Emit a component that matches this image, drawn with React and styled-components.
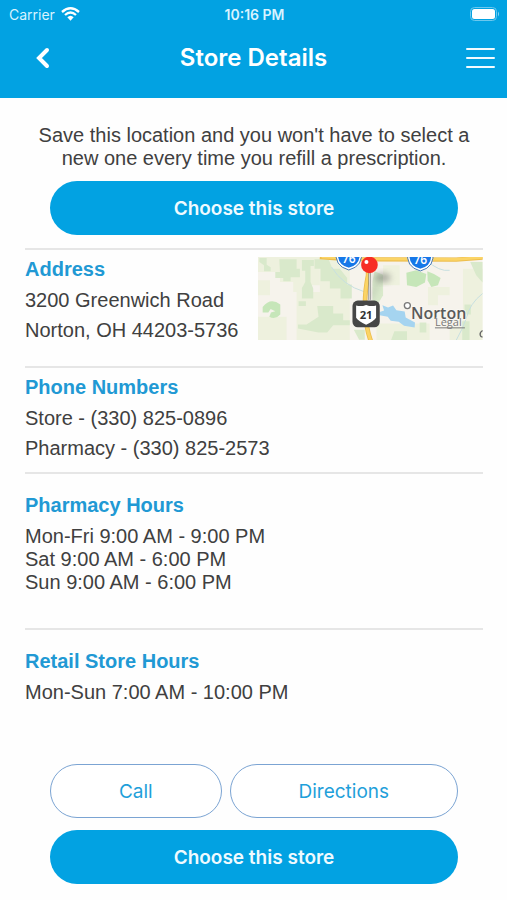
import React from "react";
import styled, { createGlobalStyle } from "styled-components";

const GlobalStyle = createGlobalStyle`
  *, *::before, *::after { box-sizing: border-box; }
  body {
    margin: 0;
    background: #fefefe;
    color: #404040;
    font-family: "Liberation Sans", Arial, sans-serif;
    font-size: 20px;
  }
  p, h1, h2, ul { margin: 0; padding: 0; }
  button { font: inherit; cursor: pointer; }
`;

const Header = styled.header`
  background: #02a2e2;
  color: #ffffff;
  font-family: Inter, sans-serif;
`;

const StatusBar = styled.div`
  display: grid;
  grid-template-columns: 1fr auto 1fr;
  align-items: center;
  height: 28px;
  padding: 0 7px 0 9px;
  color: #d8f3ff;
  font-size: 14px;
`;

const Carrier = styled.span`
  display: flex;
  align-items: center;
  gap: 6px;
`;

const Clock = styled.span`
  font-weight: 600;
`;

const Battery = styled.svg`
  justify-self: end;
`;

const NavBar = styled.div`
  display: grid;
  grid-template-columns: 60px 1fr 60px;
  align-items: center;
  height: 70px;
  padding: 0 12px 10px;
`;

const Title = styled.h1`
  font-size: 24px;
  font-weight: 600;
  line-height: 30px;
  text-align: center;
`;

const IconButton = styled.button`
  display: flex;
  justify-content: ${(p) => (p.$end ? "flex-end" : "center")};
  align-items: center;
  height: 44px;
  padding: 0;
  border: 0;
  background: none;
  color: inherit;
`;

const Main = styled.main`
  padding: 26px 24px 16px 25px;
`;

const Intro = styled.p`
  max-width: 440px;
  margin: 0 auto 11px;
  line-height: 23px;
  text-align: center;
`;

const Actions = styled.div`
  display: flex;
  flex-wrap: wrap;
  gap: 12px 8px;
  padding: 0 25px;
`;

const Button = styled.button`
  flex: 1 1 ${(p) => (p.$primary ? "100%" : "auto")};
  height: 54px;
  padding: 0 24px;
  border: ${(p) => (p.$primary ? "0" : "1px solid #7ba4d3")};
  border-radius: 27px;
  background: ${(p) => (p.$primary ? "#02a2e2" : "#ffffff")};
  color: ${(p) => (p.$primary ? "#effaff" : "#1fa0da")};
  font-family: Inter, sans-serif;
  font-size: 19px;
  font-weight: ${(p) => (p.$primary ? 600 : 400)};
`;

const Details = styled.div`
  margin-top: 13px;
`;

const Section = styled.section`
  display: flex;
  justify-content: space-between;
  gap: 20px;
  padding: ${(p) => (p.$roomy ? 16 : 4)}px 0 ${(p) => p.$after}px;
  border-top: 2px solid #e6e6e6;
`;

const SectionTitle = styled.h2`
  color: #2199d4;
  font-size: 20px;
  font-weight: 700;
  line-height: 30px;
`;

const Lines = styled.ul`
  list-style: none;
  margin-top: ${(p) => (p.$tight ? 5 : 1)}px;
  line-height: ${(p) => (p.$tight ? 23 : 30)}px;
  white-space: nowrap;
`;

const MapLink = styled.a`
  flex: 0 1 225px;
  min-width: 0;
  margin-top: 3px;
  svg { display: block; width: 100%; height: auto; }
`;

function WifiIcon() {
  return (
    <svg width="19" height="14" viewBox="0 0 57 42" fill="none" stroke="#fff" aria-hidden="true">
      <path d="M3 15 Q28.500 -7 54 15" strokeWidth="7" />
      <path d="M12 24 Q28.500 9 45 24" strokeWidth="7" />
      <path d="M19 31 Q28.500 22 38 31 L28.500 41 Z" fill="#fff" stroke="none" />
    </svg>
  );
}

function BatteryIcon() {
  return (
    <Battery width="30" height="14" viewBox="0 0 30 14" aria-label="Battery full">
      <rect x="0.500" y="0.500" width="26" height="13" rx="4" fill="none" stroke="#6cc8ee" />
      <rect x="2" y="2" width="23" height="10" rx="2.500" fill="#fff" />
      <path d="M28 4.500 Q30 7 28 9.500 Z" fill="#8ad5f3" />
    </Battery>
  );
}

function BackIcon() {
  return (
    <svg width="16" height="24" viewBox="0 0 16 24" fill="none" stroke="#fff" strokeWidth="4" strokeLinecap="round" aria-hidden="true">
      <path d="M13 4 L5 12 L13 20" />
    </svg>
  );
}

function MenuIcon() {
  return (
    <svg width="29" height="22" viewBox="0 0 29 22" stroke="#f2fbff" strokeWidth="2" strokeLinecap="round" aria-hidden="true">
      <path d="M1 2 H28 M1 11 H28 M1 20 H28" />
    </svg>
  );
}

function Interstate({ x, y }) {
  return (
    <g transform={`translate(${x} ${y})`}>
      <path d="M-34 -22 L34 -22 Q42 24 0 34 Q-42 24 -34 -22 Z" fill="#1677e8" stroke="#fff" strokeWidth="5" />
      <path d="M-37 -22 L37 -22 Q46 26 0 38 Q-46 26 -37 -22 Z" fill="none" stroke="#4a78b5" strokeWidth="3" />
      <text y="16" textAnchor="middle" fill="#fff" fontSize="36" fontWeight="600">76</text>
    </g>
  );
}

function StoreMap() {
  return (
    <svg viewBox="24 35 675 250" fontFamily="'Open Sans', sans-serif" role="img" aria-label="Map of Norton">
      <defs>
        <filter id="soft" x="-50%" y="-50%" width="200%" height="200%">
          <feGaussianBlur stdDeviation="9" />
        </filter>
        <linearGradient id="stick" x1="0" x2="1">
          <stop offset="0" stopColor="#777" />
          <stop offset="0.500" stopColor="#ddd" />
          <stop offset="1" stopColor="#777" />
        </linearGradient>
      </defs>
      <rect x="24" y="35" width="675" height="250" fill="#f6f3ec" />
      <g fill="#eef1de">
        <path d="M24 35 H210 V120 H160 V140 H130 V110 H90 V80 H24 Z" />
        <path d="M24 105 H60 V150 H24 Z M24 215 H110 V285 H24 Z" />
        <path d="M140 140 H300 V285 H140 Z M210 40 H300 V150 H210 Z" />
        <path d="M400 60 H450 V120 H400 Z M535 125 H600 V150 H565 V180 H535 Z" />
        <path d="M640 70 H699 V285 H600 V245 H640 Z M380 235 H540 V285 H380 Z" />
      </g>
      <g fill="#d9e9cb">
        <path d="M28 38 H50 V58 L62 66 V78 H42 V60 L28 50 Z" />
        <path d="M88 42 H140 V70 H150 V96 H122 V108 H100 V98 H76 V80 H90 Z" />
        <path d="M156 44 H192 V62 H182 V110 L190 130 V160 H156 V128 L166 110 V76 H156 Z" />
        <path d="M194 42 H236 L248 70 H270 L292 98 V118 H306 V160 H272 V130 H240 V108 H212 V70 H194 Z" />
        <path d="M202 182 H250 V205 H280 V225 H300 V240 H250 L232 262 H206 L144 250 V238 H170 L206 215 Z" />
        <path d="M312 254 H345 V284 H328 Z M146 168 H168 V182 H146 Z" />
        <path d="M374 78 L400 88 V150 L388 170 H368 V110 Z" />
        <path d="M662 50 H699 V112 L680 90 Z M645 178 H664 V208 H645 Z M638 228 H660 V285 H638 Z" />
        <path d="M434 258 H472 V285 H424 Z M510 232 H530 V262 H510 Z" />
      </g>
      <g fill="#c6e6b9">
        <path d="M38 185 Q62 155 91 178 V208 Q76 225 58 215 L63 202 L76 198 L62 191 L55 202 H38 Z" />
        <path d="M470 82 L500 75 L530 86 L526 112 L500 125 L472 120 Z" />
        <path d="M533 78 L553 86 L573 98 L565 120 L545 125 L534 106 Z" />
      </g>
      <g fill="none" stroke="#c7dfe0" strokeWidth="3">
        <path d="M245 65 Q278 120 345 140" />
        <path d="M699 145 Q660 175 650 220 Q640 250 620 285" />
        <path d="M530 45 Q570 80 600 75" />
      </g>
      <path d="M398 180 L415 187 L430 181 L440 195 L465 199 L468 217 L496 232 L495 247 L463 242 L447 230 L423 227 L414 215 L390 210 V200 L403 196 Z" fill="#a5d4f0" />
      <g fill="none" stroke="#edbd4c">
        <path d="M210 35 Q300 44 380 42 L620 43 L699 37" strokeWidth="13" />
        <path d="M355 45 V90 Q344 145 346 190 Q347 245 364 290" strokeWidth="14" />
      </g>
      <g fill="none" stroke="#fbd466">
        <path d="M215 35 Q300 42 380 41 L620 42 L699 36" strokeWidth="8" />
        <path d="M355 45 V90 Q344 145 346 190 Q347 245 364 290" strokeWidth="9" />
      </g>
      <Interstate x={297} y={36} />
      <Interstate x={512} y={39} />
      <ellipse cx="398" cy="97" rx="25" ry="13" fill="#555" opacity="0.450" filter="url(#soft)" />
      <path d="M362 162 L385 110" stroke="#666" strokeWidth="8" opacity="0.300" filter="url(#soft)" />
      <rect x="356" y="80" width="7" height="84" fill="url(#stick)" />
      <circle cx="359" cy="59" r="25" fill="#f72e25" />
      <circle cx="350" cy="50" r="6" fill="#fff" />
      <rect x="308" y="166" width="82" height="80" rx="16" fill="#464646" />
      <path d="M319 181 Q334 185 349 179 Q364 185 379 181 V218 Q372 229 349 239 Q326 229 319 218 Z" fill="#fff" />
      <text x="349" y="220" textAnchor="middle" fontSize="34" fontWeight="700" fill="#333">21</text>
      <circle cx="473" cy="181" r="9" fill="#fff" stroke="#777" strokeWidth="4" />
      <text x="484" y="221" fontSize="48" fontWeight="600" fill="#5a5a5a" stroke="#faf8f2" strokeWidth="5" paintOrder="stroke">Norton</text>
      <text x="556" y="243" fontSize="33" fontWeight="500" fill="#777" stroke="#faf8f2" strokeWidth="2" paintOrder="stroke">Legal</text>
      <path d="M556 248 H646" stroke="#777" strokeWidth="3" />
      <path d="M699 256 Q690 262 692 270 Q693 275 699 276" fill="none" stroke="#666" strokeWidth="4" />
    </svg>
  );
}

function InfoSection({ title, lines, tight, roomy, after, children }) {
  return (
    <Section $roomy={roomy} $after={after}>
      <div>
        <SectionTitle>{title}</SectionTitle>
        <Lines $tight={tight}>
          {lines.map((line) => (
            <li key={line}>{line}</li>
          ))}
        </Lines>
      </div>
      {children}
    </Section>
  );
}

export default function App() {
  return (
    <>
      <GlobalStyle />
      <Header>
        <StatusBar>
          <Carrier>
            Carrier
            <WifiIcon />
          </Carrier>
          <Clock>10:16 PM</Clock>
          <BatteryIcon />
        </StatusBar>
        <NavBar>
          <IconButton type="button" aria-label="Back">
            <BackIcon />
          </IconButton>
          <Title>Store Details</Title>
          <IconButton type="button" aria-label="Menu" $end>
            <MenuIcon />
          </IconButton>
        </NavBar>
      </Header>
      <Main>
        <Intro>
          Save this location and you won't have to select a new one every time you refill a prescription.
        </Intro>
        <Actions>
          <Button type="button" $primary>Choose this store</Button>
        </Actions>
        <Details>
          <InfoSection title="Address" lines={["3200 Greenwich Road", "Norton, OH 44203-5736"]} after={21}>
            <MapLink href="#map">
              <StoreMap />
            </MapLink>
          </InfoSection>
          <InfoSection title="Phone Numbers" lines={["Store - (330) 825-0896", "Pharmacy - (330) 825-2573"]} after={9} />
          <InfoSection
            title="Pharmacy Hours"
            lines={["Mon-Fri 9:00 AM - 9:00 PM", "Sat 9:00 AM - 6:00 PM", "Sun 9:00 AM - 6:00 PM"]}
            tight
            roomy
            after={34}
          />
          <InfoSection title="Retail Store Hours" lines={["Mon-Sun 7:00 AM - 10:00 PM"]} tight roomy after={60} />
        </Details>
        <Actions>
          <Button type="button">Call</Button>
          <Button type="button">Directions</Button>
          <Button type="button" $primary>Choose this store</Button>
        </Actions>
      </Main>
    </>
  );
}
